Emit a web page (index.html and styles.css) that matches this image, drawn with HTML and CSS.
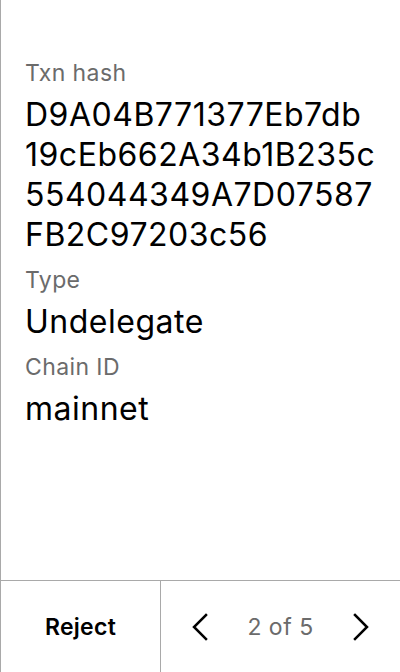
FILE: index.html
```html
<!DOCTYPE html>
<html lang="en">
<head>
<meta charset="utf-8">
<title>Review transaction</title>
<link rel="stylesheet" href="styles.css">
</head>
<body>
<div class="screen">
  <main class="content">
    <div class="field">
      <div class="label">Txn hash</div>
      <div class="value">D9A04B771377Eb7db<br>19cEb662A34b1B235c<br>554044349A7D07587<br>FB2C97203c56</div>
    </div>
    <div class="field">
      <div class="label">Type</div>
      <div class="value">Undelegate</div>
    </div>
    <div class="field">
      <div class="label">Chain ID</div>
      <div class="value">mainnet</div>
    </div>
  </main>
  <footer class="footer">
    <div class="reject">Reject</div>
    <div class="pager">
      <svg class="chev" width="16" height="28" viewBox="0 0 16 28"><polyline points="14,2 2,14 14,26" fill="none" stroke="#000" stroke-width="2.5" stroke-linecap="square"/></svg>
      <span class="count">2 of 5</span>
      <svg class="chev" width="16" height="28" viewBox="0 0 16 28"><polyline points="2,2 14,14 2,26" fill="none" stroke="#000" stroke-width="2.5" stroke-linecap="square"/></svg>
    </div>
  </footer>
</div>
</body>
</html>
```
FILE: styles.css
```css
* { box-sizing: border-box; }
html, body { margin: 0; padding: 0; background: #fff; }
body { font-family: "Inter", "Noto Sans", sans-serif; color: #000; }
.screen {
  width: 400px;
  height: 672px;
  border-left: 1px solid #a9a9a9;
  display: flex;
  flex-direction: column;
}
.content {
  flex: 1;
  padding: 57px 24px 0 24px;
  display: flex;
  flex-direction: column;
  gap: 9px;
}
.label {
  font-size: 23px;
  line-height: 32px;
  letter-spacing: 0.4px;
  color: #6b6b6b;
  margin-bottom: 6px;
}
.value {
  font-size: 32px;
  line-height: 40px;
  letter-spacing: 0.5px;
  color: #000;
}
.footer {
  height: 92px;
  border-top: 1px solid #a9a9a9;
  display: flex;
}
.reject {
  width: 160px;
  border-right: 1px solid #a9a9a9;
  display: flex;
  align-items: center;
  justify-content: center;
  font-size: 23px;
  font-weight: 600;
  letter-spacing: 0.3px;
}
.pager {
  flex: 1;
  display: flex;
  align-items: center;
  justify-content: space-between;
  padding: 0 31px;
}
.count {
  font-size: 23px;
  letter-spacing: 0.5px;
  color: #6b6b6b;
}
.chev { display: block; }
```
